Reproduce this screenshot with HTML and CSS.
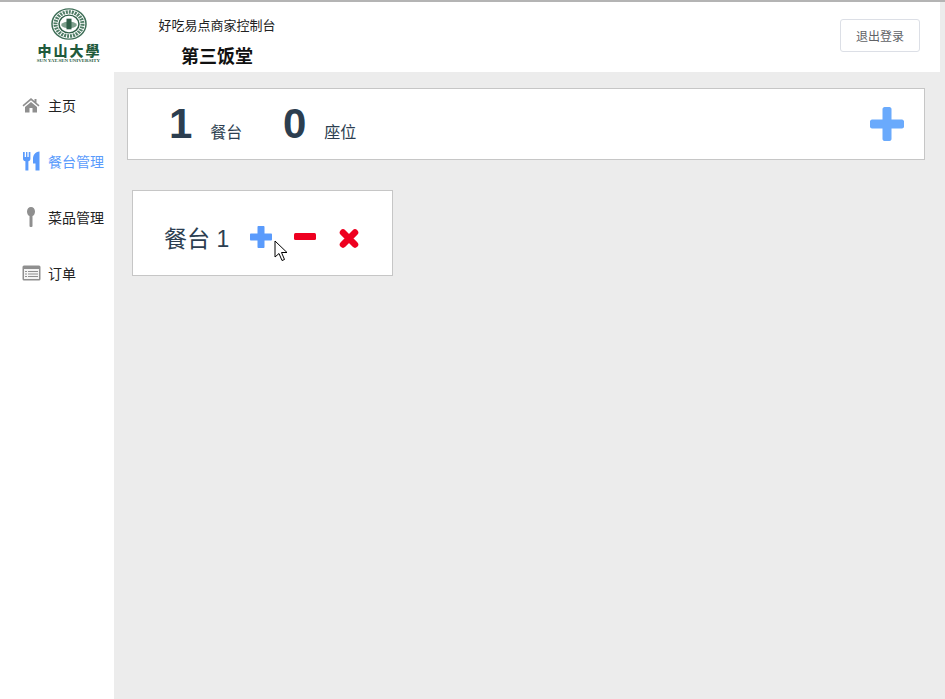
FILE: index.html
```html
<!DOCTYPE html>
<html lang="zh-CN">
<head>
    <meta charset="UTF-8">
    <title>好吃易点商家控制台</title>
    <link rel="stylesheet" href="styles.css">
</head>
<body>
    <!-- Header -->
    <div class="header">
        <div class="logo">
            <svg class="logo-seal" width="36" height="32" viewBox="0 0 36 36" preserveAspectRatio="none">
                <circle cx="18" cy="18" r="17" fill="#fff" stroke="#3f6f58" stroke-width="1.500"/>
                <circle cx="18" cy="18" r="13.500" fill="none" stroke="#4f7d66" stroke-width="4" stroke-dasharray="2 1"/>
                <circle cx="18" cy="18" r="10" fill="#fff" stroke="#2f5f48" stroke-width="1.500"/>
                <path d="M10 19c3-5 13-5 16 0-2 5-14 5-16 0z" fill="#7fa08e"/>
                <path d="M15.500 12h5v12h-5z" fill="#2f5f48"/>
            </svg>
            <div class="logo-name">中山大學</div>
            <div class="logo-en">SUN YAT-SEN UNIVERSITY</div>
        </div>
        <div class="brand">
            <div class="brand-sub">好吃易点商家控制台</div>
            <div class="brand-title">第三饭堂</div>
        </div>
        <button class="btn-logout">退出登录</button>
    </div>

    <div class="layout">
        <!-- Sidebar -->
        <div class="sidebar">
            <a href="#" class="nav-item">
                <svg class="nav-icon" width="18" height="16" viewBox="0 0 18 16"><path d="M9 1 0.500 8.200 1.500 9.400 9 3.200l7.500 6.200 1-1.200L14.500 5.700V2h-2v2L9 1zM3 10v5.500h4.500V11h3v4.500H15V10L9 5 3 10z" fill="#8f8f8f"/></svg>
                主页
            </a>
            <a href="#" class="nav-item active">
                <svg class="nav-icon" width="18" height="20" viewBox="0 0 18 20"><path d="M1 1h1.700v5H4V1h1.400v5h1.300V1h1.700v7c0 1.300-1 2-2 2.300V19.500H3.400V10.300C2 10 1 9.300 1 8V1zM11 8c0-4 2-7 6.500-7.500V19.500h-4V12.500H11V8z" fill="#5a9bfc"/></svg>
                餐台管理
            </a>
            <a href="#" class="nav-item">
                <svg class="nav-icon" width="18" height="20" viewBox="0 0 18 20"><path d="M9 0c2.400 0 4 2 4 4.600 0 2.300-1.100 4-2.500 4.500V19c0 .600-.7 1-1.500 1s-1.500-.4-1.500-1V9.100C6.100 8.600 5 6.900 5 4.600 5 2 6.600 0 9 0z" fill="#8f8f8f"/></svg>
                菜品管理
            </a>
            <a href="#" class="nav-item">
                <svg class="nav-icon nav-icon-wide" width="19" height="16" viewBox="0 0 19 16"><rect x=".5" y=".5" width="18" height="15" rx="1.500" fill="#8f8f8f"/><rect x="2" y="4" width="15" height="10" fill="#f4f4f4"/><path d="M3 6h2v1H3zM6 6h10v1H6zM3 8.500h2v1H3zM6 8.500h10v1H6zM3 11h2v1H3zM6 11h10v1H6z" fill="#8f8f8f"/></svg>
                订单
            </a>
        </div>

        <!-- Main content -->
        <div class="main">
            <div class="summary">
                <div class="stat"><span class="stat-num">1</span><span class="stat-label">餐台</span></div>
                <div class="stat"><span class="stat-num">0</span><span class="stat-label">座位</span></div>
                <svg class="add-big" width="34" height="34" viewBox="0 0 34 34"><path d="M12.500 2c0-1 1-2 2-2h5c1 0 2 1 2 2v10.500H32c1 0 2 1 2 2v5c0 1-1 2-2 2H21.500V32c0 1-1 2-2 2h-5c-1 0-2-1-2-2V21.500H2c-1 0-2-1-2-2v-5c0-1 1-2 2-2h10.500z" fill="#6aaafc"/></svg>
            </div>

            <div class="table-card">
                <span class="table-name">餐台 1</span>
                <svg class="act act-add" width="22" height="22" viewBox="0 0 22 22"><path d="M7.500 1c0-.600.500-1 1-1h5c.500 0 1 .400 1 1v6.500H21c.600 0 1 .500 1 1v5c0 .500-.400 1-1 1h-6.500V21c0 .600-.500 1-1 1h-5c-.500 0-1-.400-1-1v-6.500H1c-.600 0-1-.500-1-1v-5c0-.500.400-1 1-1h6.500z" fill="#5a9bfc"/></svg>
                <svg class="act act-minus" width="22" height="7" viewBox="0 0 22 7"><rect width="22" height="7" rx="1.500" fill="#ee0020"/></svg>
                <svg class="act act-del" width="20" height="19" viewBox="0 0 20 19"><path d="M4 3.500 16 15.500M16 3.500 4 15.500" fill="none" stroke="#ee0020" stroke-width="6.500" stroke-linecap="round"/></svg>
            </div>
        </div>
    </div>

    <!-- mouse pointer captured in the screenshot -->
    <svg class="cursor" width="14" height="22" viewBox="0 0 14 22"><path d="M1 1v16l4-3.500 3 7 2.500-1-3-7H13L1 1z" fill="#fff" stroke="#000" stroke-width="1"/></svg>
</body>
</html>
```

FILE: styles.css
```css
* {
    margin: 0;
    padding: 0;
    box-sizing: border-box;
}

body {
    font-family: "Liberation Sans", "Noto Sans CJK SC", sans-serif;
    background: #ececec;
    color: #2c3e50;
    height: 699px;
    overflow: hidden;
    border-top: 2px solid #b4b4b4;
}

/* Header */
.header {
    display: flex;
    align-items: center;
    width: 940px;
    height: 70px;
    background: #fff;
}

.logo {
    width: 137px;
    height: 70px;
    display: flex;
    flex-direction: column;
    align-items: center;
    padding-top: 6px;
}

.logo-seal {
    display: block;
}

.logo-name {
    font-family: "Noto Sans CJK TC", sans-serif;
    font-size: 14px;
    font-weight: 900;
    line-height: 14px;
    letter-spacing: 2px;
    margin-right: -2px;
    color: #1f5a3c;
    margin-top: 3px;
}

.logo-en {
    font-family: "Liberation Serif", serif;
    font-size: 5px;
    line-height: 5px;
    letter-spacing: -0.05px;
    font-weight: 700;
    color: #2f5f48;
    white-space: nowrap;
    margin-top: 1px;
}

.brand {
    width: 160px;
    padding-top: 12px;
    text-align: center;
}

.brand-sub {
    font-size: 13px;
    color: #222;
    line-height: 18px;
}

.brand-title {
    font-size: 18px;
    font-weight: 700;
    color: #111;
    line-height: 24px;
    margin-top: 10px;
}

.btn-logout {
    margin-left: auto;
    margin-right: 20px;
    margin-top: -3px;
    width: 80px;
    height: 33px;
    background: #fff;
    border: 1px solid #dcdfe6;
    border-radius: 3px;
    font-family: inherit;
    font-size: 12px;
    color: #606266;
}

.layout {
    display: flex;
    height: 627px;
}

/* Sidebar */
.sidebar {
    width: 114px;
    background: #fff;
    padding-top: 5px;
}

.nav-item {
    display: flex;
    align-items: center;
    height: 56px;
    font-size: 14px;
    color: #222;
    text-decoration: none;
}

.nav-item.active {
    color: #5a9bfc;
}

.nav-icon {
    flex: none;
    margin-left: 22px;
    margin-right: 8px;
}

.nav-icon-wide {
    margin-right: 7px;
}

/* Main content */
.main {
    flex: 1;
    padding: 16px 20px 0 13px;
}

.summary {
    display: flex;
    align-items: center;
    width: 798px;
    height: 72px;
    background: #fff;
    border: 1px solid #c6c6c6;
    padding-left: 41px;
}

.stat {
    display: flex;
    align-items: baseline;
    width: 114px;
}

.stat-num {
    font-size: 42px;
    font-weight: 700;
    line-height: 46px;
    color: #2c3e50;
}

.stat-label {
    font-size: 16px;
    margin-left: 18px;
}

.add-big {
    margin-left: auto;
    margin-right: 20px;
}

.table-card {
    display: flex;
    align-items: center;
    width: 261px;
    height: 86px;
    margin: 30px 0 0 5px;
    background: #fff;
    border: 1px solid #c6c6c6;
    padding: 8px 0 0 31px;
}

.table-name {
    font-size: 23px;
    width: 86px;
    white-space: nowrap;
}

.act {
    flex: none;
}

.act-minus {
    margin-left: 22px;
    margin-top: -2px;
}

.act-del {
    margin-left: 23px;
    margin-top: 2px;
}

.cursor {
    position: absolute;
    left: 274px;
    top: 240px;
}
```
